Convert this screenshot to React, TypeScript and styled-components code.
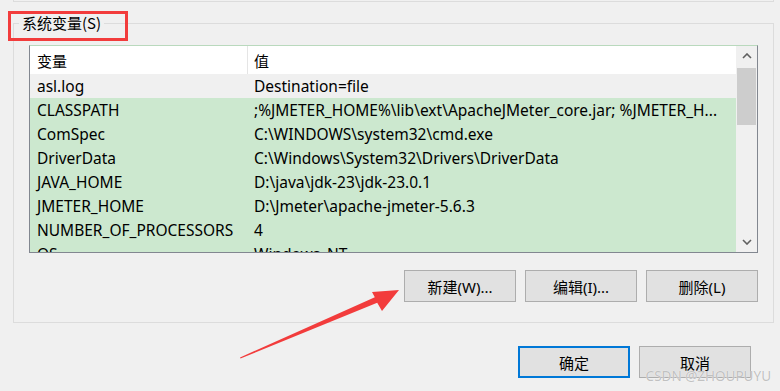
import React from "react";
import styled, { createGlobalStyle } from "styled-components";

const Global = createGlobalStyle`
  html, body { margin: 0; padding: 0; background: #f0f0f0; }
  body {
    width: 780px; height: 391px; overflow: hidden;
    font-family: "Noto Sans", "Noto Sans CJK SC", sans-serif;
  }
`;

const Page = styled.div`
  position: relative;
  width: 780px;
  height: 391px;
  box-sizing: border-box;
  padding: 0 6px 0 13px;
  display: flex;
  flex-direction: column;
  color: #000;
  font-size: 15px;
`;

const PrevGroup = styled.div`
  height: 1px;
  border: 1px solid #dcdcdc;
  border-top: none;
`;

const GroupBox = styled.section`
  position: relative;
  margin-top: 21px;
  border: 1px solid #dcdcdc;
  padding: 21px 15px 20px 15px;
  display: flex;
  flex-direction: column;
`;

const GroupTitle = styled.span`
  position: absolute;
  top: -12px;
  left: 5px;
  padding: 0 3px;
  background: #f0f0f0;
  font-size: 15px;
  line-height: 22px;
  font-family: "Noto Sans CJK SC", sans-serif;
`;

const ListBox = styled.div`
  height: 208px;
  box-sizing: border-box;
  border: 1px solid #828790;
  border-top-color: #b9d9bd;
  display: flex;
  overflow: hidden;
`;

const Table = styled.div`
  flex: 1;
  display: flex;
  flex-direction: column;
  overflow: hidden;
  background: #cce8cf;
`;

const HeaderRow = styled.div`
  display: grid;
  grid-template-columns: 218px 1fr;
  height: 28px;
  flex: none;
  background: #ffffff;
`;

const HeaderCell = styled.div<{ $first?: boolean }>`
  display: flex;
  align-items: center;
  padding-left: ${(p) => (p.$first ? "7px" : "6px")};
  border-right: ${(p) => (p.$first ? "1px solid #e5e5e5" : "none")};
  font-family: "Noto Sans CJK SC", sans-serif;
`;

const Row = styled.div<{ $active?: boolean }>`
  display: grid;
  grid-template-columns: 218px 1fr;
  height: 24px;
  flex: none;
  background: ${(p) => (p.$active ? "#f0f0f0" : "transparent")};
`;

const Cell = styled.div<{ $first?: boolean }>`
  display: flex;
  align-items: center;
  padding-left: ${(p) => (p.$first ? "7px" : "6px")};
  padding-bottom: 1px;
  white-space: nowrap;
  overflow: hidden;
  font-size: 15.5px;
`;

const ScrollBar = styled.div`
  width: 21px;
  flex: none;
  background: #f0f0f0;
  display: flex;
  flex-direction: column;
`;

const ScrollBtn = styled.div`
  height: 20px;
  flex: none;
  display: flex;
  align-items: center;
  justify-content: center;
`;

const Track = styled.div`
  flex: 1;
  padding: 2px 1px 0 1px;
`;

const Thumb = styled.div`
  height: 57px;
  background: #cdcdcd;
`;

const ButtonRow = styled.div`
  margin-top: 17px;
  display: flex;
  justify-content: flex-end;
  gap: 9px;
`;

const Button = styled.button<{ $primary?: boolean }>`
  width: 112px;
  height: 32px;
  box-sizing: border-box;
  background: #e1e1e1;
  border: ${(p) => (p.$primary ? "2px solid #0078d7" : "1px solid #adadad")};
  font-family: "Noto Sans", "Noto Sans CJK SC", sans-serif;
  font-size: 15px;
  color: #000;
  padding: 0;
`;

const DialogButtons = styled.div`
  margin-top: 23px;
  margin-right: 23px;
  display: flex;
  justify-content: flex-end;
  gap: 9px;
`;

const RedBox = styled.div`
  position: absolute;
  left: 8px;
  top: 11px;
  width: 120px;
  height: 30px;
  box-sizing: border-box;
  border: 3px solid #f23c3c;
  pointer-events: none;
`;

const Overlay = styled.svg`
  position: absolute;
  left: 0;
  top: 0;
  pointer-events: none;
`;

const Watermark = styled.div`
  position: absolute;
  right: 9px;
  bottom: 6px;
  font-family: "Noto Sans", sans-serif;
  font-size: 13.5px;
  color: rgba(185, 185, 185, 0.9);
  text-shadow: 0 0 1px #fff;
`;

const rows: [string, string][] = [
  ["asl.log", "Destination=file"],
  ["CLASSPATH", ";%JMETER_HOME%\\lib\\ext\\ApacheJMeter_core.jar; %JMETER_H..."],
  ["ComSpec", "C:\\WINDOWS\\system32\\cmd.exe"],
  ["DriverData", "C:\\Windows\\System32\\Drivers\\DriverData"],
  ["JAVA_HOME", "D:\\java\\jdk-23\\jdk-23.0.1"],
  ["JMETER_HOME", "D:\\Jmeter\\apache-jmeter-5.6.3"],
  ["NUMBER_OF_PROCESSORS", "4"],
  ["OS", "Windows_NT"],
];

const Chevron = ({ up }: { up?: boolean }) => (
  <svg width="10" height="6" viewBox="0 0 10 6">
    <path
      d={up ? "M1 5 L5 1 L9 5" : "M1 1 L5 5 L9 1"}
      fill="none"
      stroke="#606060"
      strokeWidth="1.6"
    />
  </svg>
);

export default function App() {
  return (
    <>
      <Global />
      <Page>
        <PrevGroup />
        <GroupBox>
          <GroupTitle>系统变量(S)</GroupTitle>
          <ListBox>
            <Table>
              <HeaderRow>
                <HeaderCell $first>变量</HeaderCell>
                <HeaderCell>值</HeaderCell>
              </HeaderRow>
              {rows.map(([k, v], i) => (
                <Row key={k} $active={i === 0}>
                  <Cell $first>{k}</Cell>
                  <Cell>{v}</Cell>
                </Row>
              ))}
            </Table>
            <ScrollBar>
              <ScrollBtn>
                <Chevron up />
              </ScrollBtn>
              <Track>
                <Thumb />
              </Track>
              <ScrollBtn>
                <Chevron />
              </ScrollBtn>
            </ScrollBar>
          </ListBox>
          <ButtonRow>
            <Button>新建(W)...</Button>
            <Button>编辑(I)...</Button>
            <Button>删除(L)</Button>
          </ButtonRow>
        </GroupBox>
        <DialogButtons>
          <Button $primary>确定</Button>
          <Button>取消</Button>
        </DialogButtons>
        <RedBox />
        <Overlay width="780" height="391" viewBox="0 0 780 391">
          <polygon
            points="240,357.5 374.8,297.2 372,292 399,290 382,311 377.2,302.8 240.5,358.5"
            fill="#f23c3c"
          />
        </Overlay>
        <Watermark>CSDN @ZHOUPUYU</Watermark>
      </Page>
    </>
  );
}
